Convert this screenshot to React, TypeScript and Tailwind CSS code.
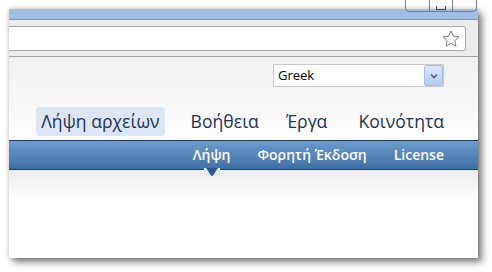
import React from 'react';

const tabs = [
    { label: 'Λήψη αρχείων', active: true, ml: 'ml-0' },
    { label: 'Βοήθεια', active: false, ml: 'ml-[21px]' },
    { label: 'Έργα', active: false, ml: 'ml-[17px]' },
    { label: 'Κοινότητα', active: false, ml: 'ml-[21px]' },
];

const subLinks = ['Λήψη', 'Φορητή Έκδοση', 'License'];

const StarIcon = () => (
    <svg width="20" height="20" viewBox="0 0 24 24" fill="none" stroke="#7a7a7a" strokeWidth="1.2" strokeLinejoin="round">
        <path d="M12 2.5l2.9 6.1 6.6.8-4.9 4.6 1.3 6.6L12 17.3l-5.9 3.3 1.3-6.6-4.9-4.6 6.6-.8z" />
    </svg>
);

export default function App() {
    return (
        <div className="relative w-[492px] h-[272px] bg-white overflow-hidden" style={{ fontFamily: '"Open Sans", "Noto Sans", sans-serif' }}>
            {/* window caption buttons, hanging above the frame */}
            <div className="absolute left-[405px] top-[-10px] w-[72px] h-[22px] border border-[#6f7f97] rounded-b-[4px] flex z-10">
                <div className="flex-1 border-r border-[#6f7f97]" />
                <div className="flex-1 border-r border-[#6f7f97] flex items-end justify-center pb-[1px]">
                    <div className="w-[10px] h-[4px] border border-t-0 border-[#3d4a5c]" />
                </div>
                <div className="flex-1" />
            </div>

            <div className="absolute left-[9px] top-[9px] w-[469px] h-[249px] flex flex-col bg-white shadow-[4px_4px_7px_rgba(0,0,0,0.5),0_0_5px_rgba(0,0,0,0.18)]">
                {/* title bar */}
                <div className="h-[11px] bg-[#a0bde4] border-b border-[#7d95b8]" />

                {/* toolbar with address box */}
                <div className="h-[37px] bg-[#ececec] border-b border-[#a3a3a3] pt-[6px] pr-[12px]">
                    <div className="h-[25px] bg-white border border-l-0 border-[#a9a9a9] rounded-r-[3px] flex items-center justify-end pr-[4px]">
                        <StarIcon />
                    </div>
                </div>

                {/* page */}
                <div className="flex-1 flex flex-col bg-gradient-to-b from-[#f0f0f0] to-white to-[45%]">
                    <div className="flex justify-end pr-[34px] pt-[7px]">
                        <div className="w-[171px] h-[23px] bg-white border border-[#c9c9c9] flex items-center">
                            <span className="flex-1 pl-[4px] text-[13px] text-black leading-none">Greek</span>
                            <div className="w-[19px] h-[21px] bg-gradient-to-b from-[#dbe7fc] to-[#b6cbf1] border border-[#a5bde6] rounded-[2px] flex items-center justify-center">
                                <svg width="8" height="6" viewBox="0 0 8 6">
                                    <path d="M1 1.5l3 3 3-3" fill="none" stroke="#4b5f86" strokeWidth="1.6" />
                                </svg>
                            </div>
                        </div>
                    </div>

                    <div className="flex items-center justify-end pr-[29px] mt-[20px] h-[29px]">
                        {tabs.map((t) => (
                            <div
                                key={t.label}
                                className={`${t.ml} h-[29px] px-[5px] flex items-center rounded-[4px] text-[17.6px] text-[#1f3350] ${t.active ? 'bg-[#dde7f3]' : ''}`}
                            >
                                {t.label}
                            </div>
                        ))}
                    </div>

                    <div className="mt-[4px] h-[30px] bg-gradient-to-b from-[#6d9ccd] to-[#3f6fa6] border-t border-b border-[#1d3e68] flex items-center justify-end pr-[34px] gap-[27px]">
                        {subLinks.map((s, i) => (
                            <div key={s} className="relative text-[14px] font-semibold text-white leading-none">
                                {s}
                                {i === 0 && (
                                    <div className="absolute left-1/2 -translate-x-1/2 top-[20px] w-[16px] h-[8px] bg-[#e9e9e9] flex justify-center">
                                        <svg width="14" height="8" viewBox="0 0 14 8">
                                            <path d="M1 0h12L8 7.5Q7 8.3 6 7.5z" fill="#2f5a8e" />
                                        </svg>
                                    </div>
                                )}
                            </div>
                        ))}
                    </div>

                    <div className="flex-1 bg-gradient-to-b from-[#ececec] to-white to-[35%]" />
                </div>
            </div>
        </div>
    );
}
